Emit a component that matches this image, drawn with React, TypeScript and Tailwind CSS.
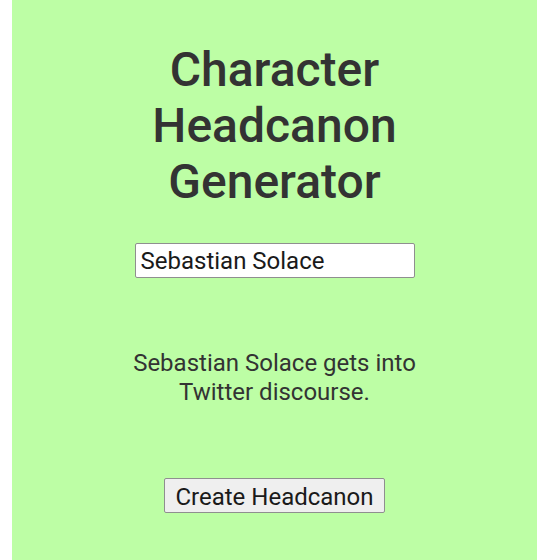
export default function App() {
  return (
    <div className="min-h-[560px] bg-white font-['Roboto','Liberation_Sans',sans-serif]">
      <div className="ml-[12px] flex min-h-[560px] w-[525px] flex-col items-center bg-[#bdfea5] pt-[42px] text-[#333333]">
        <h1 className="w-[300px] text-center text-[48px] font-medium leading-[56px]">
          Character Headcanon Generator
        </h1>

        <input
          className="mt-[33px] h-[35px] w-[280px] rounded-[2px] border border-[#8f8f8f] bg-white px-[5px] text-[24px] text-[#1a1a1a] outline-none"
          defaultValue="Sebastian Solace"
          type="text"
        />

        <p className="mt-[71px] w-[290px] text-center text-[24px] leading-[29px]">
          Sebastian Solace gets into Twitter discourse.
        </p>

        <button
          className="mt-[71px] h-[35px] rounded-[2px] border border-[#8f8f8f] bg-[#efefef] px-[10px] text-[24px] text-[#1a1a1a]"
          type="button"
        >
          Create Headcanon
        </button>
      </div>
    </div>
  );
}
